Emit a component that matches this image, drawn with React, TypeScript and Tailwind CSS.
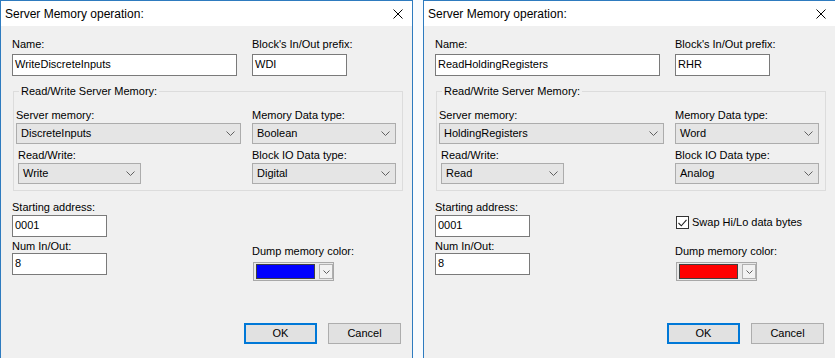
import React from "react";

// Windows-style "Server Memory operation" dialogs, side by side

const Chevron = () => (
  <svg width="9" height="5" viewBox="0 0 9 5" className="shrink-0">
    <path d="M0.5 0.5 L4.5 4.5 L8.5 0.5" fill="none" stroke="#606060" strokeWidth="1" />
  </svg>
);

const Label = ({ text, className = "" }: { text: string; className?: string }) => (
  <div className={`h-[13px] leading-[13px] text-[11px] whitespace-nowrap ${className}`}>{text}</div>
);

const TextBox = ({ value, className }: { value: string; className: string }) => (
  <div className={`h-[22px] border border-[#7a7a7a] bg-white pl-[2px] pb-[1px] flex items-center text-[11px] ${className}`}>
    {value}
  </div>
);

const ComboBox = ({ value, className }: { value: string; className: string }) => (
  <div
    className={`h-[21px] border border-[#acacac] bg-[#e5e5e5] pl-[4px] pr-[5px] flex items-center justify-between text-[11px] ${className}`}
  >
    <span>{value}</span>
    <Chevron />
  </div>
);

const ColorPicker = ({ color }: { color: string }) => (
  <div className="ml-[1px] mt-[4px] w-[81px] h-[19px] border border-[#a8a8a8] bg-[#e8e8e8] flex items-center pl-[2px]">
    <div className="w-[59px] h-[15px] border border-[#404040]" style={{ backgroundColor: color }} />
    <div className="ml-[4px] w-[14px] h-[15px] border border-[#b0b0b0] bg-[#f2f2f2] flex items-center justify-center">
      <svg width="7" height="4" viewBox="0 0 7 4">
        <path d="M0.5 0.5 L3.5 3.5 L6.5 0.5" fill="none" stroke="#606060" strokeWidth="1" />
      </svg>
    </div>
  </div>
);

interface DialogProps {
  name: string;
  prefix: string;
  server: string;
  memType: string;
  rw: string;
  ioType: string;
  swap: boolean;
  color: string;
}

const Dialog: React.FC<DialogProps> = ({ name, prefix, server, memType, rw, ioType, swap, color }) => {
  return (
    <div className="w-[413px] h-[380px] shrink-0 border border-[#2e7bbf] bg-[#f0f0f0] flex flex-col text-black">
      <div className="h-[25px] bg-white flex items-center justify-between pl-[4px] pr-[9px]">
        <span className="text-[12px]">Server Memory operation:</span>
        <svg width="10" height="10" viewBox="0 0 10 10">
          <path d="M0.5 0.5 L9.5 9.5 M9.5 0.5 L0.5 9.5" stroke="#000" strokeWidth="1" />
        </svg>
      </div>

      <div className="px-[11px] pt-[12px]">
        <div className="flex gap-[15px]">
          <div className="w-[225px]">
            <Label text="Name:" />
            <TextBox value={name} className="mt-[3px] w-[225px]" />
          </div>
          <div className="w-[95px]">
            <Label text="Block's In/Out prefix:" />
            <TextBox value={prefix} className="mt-[3px] w-[95px]" />
          </div>
        </div>

        <fieldset className="mt-[9px] ml-[1px] w-[390px] border border-[#dcdcdc]">
          <legend className="ml-[5px] px-[2px] text-[11px] leading-[13px]">Read/Write Server Memory:</legend>
          <div className="pt-[11px] pl-[2px] pb-[6px] grid grid-cols-[225px_144px] gap-x-[11px]">
            <div>
              <Label text="Server memory:" />
              <ComboBox value={server} className="mt-[1px] w-[225px]" />
            </div>
            <div>
              <Label text="Memory Data type:" />
              <ComboBox value={memType} className="mt-[1px] w-[144px]" />
            </div>
            <div className="mt-[5px] ml-[2px]">
              <Label text="Read/Write:" />
              <ComboBox value={rw} className="mt-[1px] w-[123px]" />
            </div>
            <div className="mt-[5px]">
              <Label text="Block IO Data type:" />
              <ComboBox value={ioType} className="mt-[1px] w-[144px]" />
            </div>
          </div>
        </fieldset>

        <div className="mt-[10px] flex">
          <div className="w-[240px]">
            <Label text="Starting address:" />
            <TextBox value="0001" className="mt-[1px] w-[95px]" />
            <Label text="Num In/Out:" className="mt-[3px]" />
            <TextBox value="8" className="w-[95px]" />
          </div>
          <div className="w-[149px]">
            <div className="h-[44px] pt-[15px]">
              {swap && (
                <div className="flex items-center ml-[1px]">
                  <div className="w-[13px] h-[13px] border border-[#333] bg-white flex items-center justify-center">
                    <svg width="9" height="8" viewBox="0 0 9 8">
                      <path d="M0.5 4 L3.3 6.8 L8.5 0.8" fill="none" stroke="#222" strokeWidth="1.1" />
                    </svg>
                  </div>
                  <span className="ml-[3px] text-[11px] leading-[13px] whitespace-nowrap">Swap Hi/Lo data bytes</span>
                </div>
              )}
            </div>
            <Label text="Dump memory color:" />
            <ColorPicker color={color} />
          </div>
        </div>

        <div className="mt-[42px] flex justify-end gap-[11px]">
          <button className="w-[73px] h-[21px] border-2 border-[#0078d7] bg-[#e1e1e1] text-[11px] leading-none">
            OK
          </button>
          <button className="w-[73px] h-[21px] border border-[#adadad] bg-[#e1e1e1] text-[11px] leading-none">
            Cancel
          </button>
        </div>
      </div>
    </div>
  );
};

export default function App() {
  return (
    <div className="w-[835px] h-[358px] overflow-hidden flex gap-[10px] bg-[#f8fbfe] font-['Liberation_Sans',Arial,sans-serif]">
      <Dialog
        name="WriteDiscreteInputs"
        prefix="WDI"
        server="DiscreteInputs"
        memType="Boolean"
        rw="Write"
        ioType="Digital"
        swap={false}
        color="#0000ff"
      />
      <Dialog
        name="ReadHoldingRegisters"
        prefix="RHR"
        server="HoldingRegisters"
        memType="Word"
        rw="Read"
        ioType="Analog"
        swap={true}
        color="#ff0000"
      />
    </div>
  );
}
